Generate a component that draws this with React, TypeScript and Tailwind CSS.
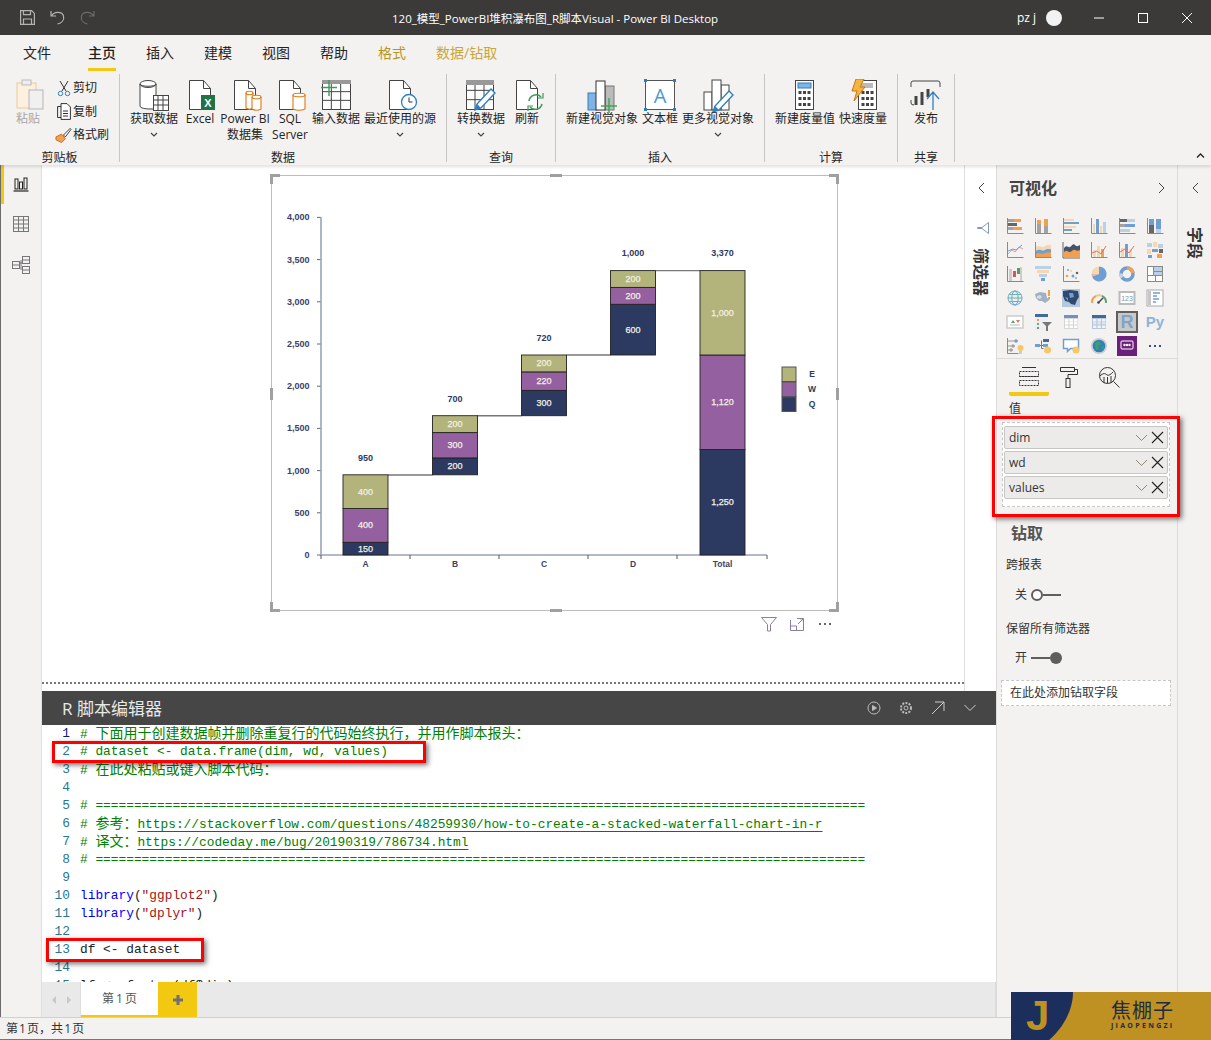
import React from "react";

const r = (x: number, y: number, w: number, h: number, c: string, key?: number) => <rect key={key ?? `${x}-${y}-${w}-${h}-${c}`} x={x} y={y} width={w} height={h} fill={c} />;
const o = "#f0a050", t = "#f7d7ae", b = "#6f9fd2", l = "#b9d0e8", g = "#a3a3a3", d = "#666666";
const ax = <path d="M1.5 1v15.5h16" fill="none" stroke="#8a8a8a" strokeWidth="1" />;
const S = ({ children }: { children: React.ReactNode }) => <svg width="18" height="18" viewBox="0 0 18 18">{children}</svg>;

const gallery: React.ReactNode[] = [
  <>{ax}{r(2, 2, 6, 3, g)}{r(8, 2, 7, 3, o)}{r(2, 6, 9, 3, d)}{r(2, 10, 5, 3, g)}{r(7, 10, 9, 3, o)}</>,
  <>{ax}{r(3, 7, 4, 9, g)}{r(3, 3, 4, 4, o)}{r(10, 9, 4, 7, g)}{r(10, 2, 4, 7, o)}</>,
  <>{ax}{r(2, 2, 10, 2, t)}{r(2, 5, 15, 2, b)}{r(2, 9, 12, 2, t)}{r(2, 12, 8, 2, b)}</>,
  <>{ax}{r(3, 7, 2, 9, t)}{r(6, 2, 3, 14, b)}{r(10, 9, 2, 7, t)}{r(13, 5, 3, 11, l)}</>,
  <>{ax}{r(2, 2, 7, 3, d)}{r(9, 2, 8, 3, l)}{r(2, 7, 5, 3, g)}{r(7, 7, 10, 3, b)}{r(2, 12, 10, 3, l)}</>,
  <>{ax}{r(3, 2, 5, 6, b)}{r(3, 8, 5, 8, d)}{r(10, 2, 5, 10, b)}{r(10, 12, 5, 4, l)}</>,
  <>{ax}<path d="M2 13l4-4 3 2 4-5 4 2" fill="none" stroke="#e69a9a" /><path d="M2 10l5-2 3 1 6-5" fill="none" stroke={b} /></>,
  <>{ax}<path d="M2 6c4-3 6 2 9-1 3-2 4-1 6-1v12H2z" fill={t} /><path d="M2 10c4-3 6 1 9-1 3-2 4 0 6-1v8H2z" fill={b} /><path d="M2 13c4-2 6 1 9-1 3-1 4 0 6-1v5H2z" fill={o} /></>,
  <><path d="M1 1v16h17" fill="none" stroke="#666" /><path d="M2 7c3-4 4 0 6-1s3-4 5-2 3 1 5 0v12H2z" fill="#44546a" /><path d="M2 11c3-3 4 0 6 0s3-3 5-2 3 1 5 0v7H2z" fill={o} /></>,
  <>{ax}{r(3, 9, 3, 7, t)}{r(7, 5, 3, 11, t)}{r(11, 8, 3, 8, o)}<path d="M2 12l5-2 4 3 5-8" fill="none" stroke="#d8776a" /></>,
  <>{ax}{r(3, 7, 3, 9, t)}{r(7, 3, 3, 13, b)}{r(11, 8, 3, 8, t)}<path d="M2 11l5-3 4 4 5-7" fill="none" stroke="#d8776a" /></>,
  <>{r(1, 2, 5, 4, l)}{r(7, 1, 4, 5, t)}{r(12, 3, 5, 4, l)}{r(1, 8, 4, 5, t)}{r(6, 8, 6, 3, b)}{r(13, 8, 4, 4, d)}{r(2, 14, 4, 3, b)}{r(11, 13, 5, 4, o)}</>,
  <><path d="M1.5 1v15.5h16" fill="none" stroke="#888" />{r(3, 4, 3, 12, "#ccc")}{r(7, 6, 3, 6, "#d05a50")}{r(11, 3, 3, 6, "#5a9a6a")}{r(14, 2, 2, 14, "#ccc")}</>,
  <>{r(1, 1, 16, 3, l)}{r(3, 5, 12, 3, t)}{r(5, 9, 8, 3, l)}{r(7, 13, 4, 3, b)}</>,
  <>{ax}<circle cx="5" cy="11" r="1.3" fill={o} /><circle cx="9" cy="6" r="1.3" fill={t} /><circle cx="11" cy="11" r="1.5" fill={b} /><circle cx="15" cy="8" r="1.3" fill={d} /><circle cx="6" cy="5" r="1" fill={b} /><circle cx="14" cy="13" r="1" fill={g} /></>,
  <><path d="M9 9V1.5a7.5 7.5 0 1 1-7 10z" fill={b} /><path d="M9 9V1.5A7.5 7.5 0 0 0 1.5 9z" fill={t} /><path d="M9 9H1.5q0 1.5.5 2.5z" fill="#e9b7a8" /></>,
  <><circle cx="9" cy="9" r="6" fill="none" stroke={b} strokeWidth="3.5" /><path d="M9 3a6 6 0 0 1 6 5" fill="none" stroke={o} strokeWidth="3.5" /><path d="M4 12.5a6 6 0 0 1-1-4" fill="none" stroke="#cbd5e0" strokeWidth="3.5" /></>,
  <>{r(1, 1, 16, 16, "#8a8a8a")}{r(2, 2, 5, 8, "#fff")}{r(8, 2, 8, 4, l)}{r(8, 7, 8, 3, l)}{r(2, 11, 7, 5, "#fff")}{r(10, 11, 6, 5, "#fff")}</>,
  <><circle cx="9" cy="9" r="7" fill="#e6f0f6" stroke="#6fa4c8" /><ellipse cx="9" cy="9" rx="3.2" ry="7" fill="none" stroke="#6fa4c8" /><path d="M2 9h14M3 5.5h12M3 12.5h12" stroke="#6fb3a0" fill="none" /></>,
  <><path d="M1 5l5-2 6 1 1 5 3 1-2 2-3 2-3-2-3 0-3-3z" fill="#9fb1c4" /><path d="M3 7l3-1 2 2-2 2-3-1z" fill="#d9dee5" /><rect x="14" y="1" width="2" height="6" fill={o} /><rect x="14" y="8" width="2" height="2" fill={o} /></>,
  <><rect x="0" y="0" width="18" height="18" fill="#b5c7dc" /><path d="M1 2l7-1 8 1 1 6-2 3-2 5-4-1-2-2-4-1-2-5z" fill="#2f4a6e" /><path d="M7 4l4 0 1 4-4 1zM3 8l3 1 0 3z" fill={b} /></>,
  <><path d="M2 14a7 7 0 0 1 4-7" fill="none" stroke={o} strokeWidth="2" /><path d="M6 7a7 7 0 0 1 6 0" fill="none" stroke="#e9c98f" strokeWidth="2" /><path d="M12 7a7 7 0 0 1 4 7" fill="none" stroke="#5f9f7a" strokeWidth="2" /><path d="M9 13l4-4" stroke="#444" strokeWidth="1.5" /><circle cx="8.5" cy="13.5" r="1.3" fill="#444" /></>,
  <><rect x="1.5" y="3" width="15" height="12" fill="#fff" stroke="#bbb" strokeWidth="2" /><text x="9" y="11.5" textAnchor="middle" fontSize="7" fill="#7a93ad" fontFamily="Liberation Sans, sans-serif">123</text></>,
  <><rect x="1" y="1" width="16" height="16" fill="#fff" stroke="#aaa" /><rect x="2" y="2" width="3" height="14" fill="#c8c8c8" /><path d="M7 4h7M7 7h4M7 10h6M7 13h3" stroke={b} strokeWidth="1.5" /></>,
  <><rect x="1" y="3" width="16" height="12" fill="#fff" stroke="#ccc" strokeWidth="1.5" /><path d="M5 10l2-3 2 3z" fill="#5f9f7a" /><path d="M10 7h4l-2 3z" fill="#d8776a" /><path d="M4 12h10" stroke="#bbb" /></>,
  <>{r(1, 1, 13, 16, "#eee")}{r(1, 1, 13, 3, "#3f6a9a")}{r(3, 6, 2, 2, o)}{r(3, 10, 2, 2, b)}{r(3, 14, 2, 2, "#5f9f7a")}<path d="M8 9h10l-4 4v5h-2v-5z" fill="#777" /></>,
  <>{r(2, 2, 14, 14, "#d5d5d5")}{r(2, 2, 14, 3, "#6f93bf")}{[3, 7.5, 12].flatMap((x) => [6, 9, 12.5].map((y) => r(x, y, 3.4, y === 9 ? 2.5 : 2.6, "#fff")))}</>,
  <>{r(2, 2, 14, 14, "#b8c6d8")}{r(2, 2, 14, 3, "#3f6a9a")}{[3, 7.5, 12].flatMap((x) => [6, 9, 12.5].map((y) => r(x, y, 3.4, 2.5, y === 9 ? "#dce6f2" : "#eef3f9")))}</>,
  null,
  null,
  <><path d="M1.5 1v15.5h11" fill="none" stroke="#8a8a8a" /><path d="M2 4h10M2 9h7M2 13h5" stroke="#999" /><circle cx="10" cy="4" r="1.7" fill={b} /><circle cx="7" cy="9" r="1.7" fill={g} /><circle cx="5" cy="13" r="1.7" fill={g} /><circle cx="14.5" cy="11" r="3" fill="#f5c76a" />{r(13, 14, 3, 3, "#ccc")}</>,
  <>{r(1, 7, 5, 3, b)}{r(9, 2, 6, 3, "#3f6a9a")}{r(9, 7, 5, 3, b)}<path d="M6 8.5h3M7.5 3.5v8h2" fill="none" stroke="#777" /><circle cx="13.5" cy="13" r="3.5" fill="#f5c76a" /></>,
  <><path d="M1.5 2.5h15v9h-8l-3 3v-3h-4z" fill="#fff" stroke={b} strokeWidth="1.5" /><circle cx="14" cy="13" r="3.5" fill="#f5c76a" /></>,
  <><circle cx="9" cy="9" r="8" fill="#ccc" /><circle cx="9" cy="9" r="6.3" fill="#2f7fc4" /><path d="M5 6l4-2 2 3-3 2 1 3-3 1zM11 10l3-1-1 4z" fill="#3fa35a" /></>,
  null,
  null,
];

const Doc = ({ children }: { children?: React.ReactNode }) => (
  <svg width="36" height="34" viewBox="-2 0 36 34"><path d="M5.5 1.5h14l7 8v21h-21z" fill="#fff" stroke="#444" strokeWidth="1" /><path d="M19.5 1.5v8h7" fill="none" stroke="#444" />{children}</svg>
);
const Cyl = ({ x, y, w, h }: { x: number; y: number; w: number; h: number }) => (
  <g fill="#fff" stroke="#dd7a10" strokeWidth="1.1"><path d={`M${x} ${y}v${h}q${w / 2} 2.5 ${w} 0v-${h}`} /><ellipse cx={x + w / 2} cy={y} rx={w / 2} ry="1.8" /></g>
);
const Grid = ({ x, y, w, h, c = "#444" }: { x: number; y: number; w: number; h: number; c?: string }) => (
  <g stroke={c} fill="none"><rect x={x + .5} y={y + .5} width={w} height={h} fill="#fff" /><path d={`M${x + w / 3} ${y}v${h}M${x + 2 * w / 3} ${y}v${h}M${x} ${y + h / 3}h${w}M${x} ${y + 2 * h / 3}h${w}`} /></g>
);
const Pencil = ({ x, y, s = 1 }: { x: number; y: number; s?: number }) => (
  <g transform={`translate(${x} ${y}) scale(${s})`}><path d="M17 1l4 4-14 15-6 2 2-6z" fill="#fff" stroke="#2e7fc2" strokeWidth="1.4" /><path d="M1 22l2-6 4 4z" fill="#2e7fc2" /></g>
);
const Calc = ({ x = 8 }: { x?: number }) => (
  <g><rect x={x + .5} y="1.5" width="18" height="29" fill="#fff" stroke="#444" />{[0, 1, 2].flatMap((i) => [0, 1, 2].map((j) => <rect key={`${i}${j}`} x={x + 3.5 + i * 4.5} y={12 + j * 6} width="3" height="3" fill="#444" />))}</g>
);

const Lab = ({ children, className = "" }: { children: React.ReactNode; className?: string }) => <div className={`text-center text-[12px] leading-[16px] text-[#252423] ${className}`}>{children}</div>;
const Chev = () => <svg className="mx-auto mt-[5px]" width="8" height="6" viewBox="0 0 8 6"><path d="M1 1l3 3 3-3" fill="none" stroke="#444" strokeWidth="1.2" /></svg>;
const Item = ({ w, icon, label, chev }: { w: string; icon: React.ReactNode; label: React.ReactNode; chev?: boolean }) => (
  <div className={`${w} flex flex-col items-center`}>
    <div className="h-[32px] flex items-start justify-center">{icon}</div>
    <Lab className="whitespace-nowrap">{label}</Lab>
    {chev && <Chev />}
  </div>
);
const Group = ({ w, title, children, pl }: { w: string; title: string; children: React.ReactNode; pl: string }) => (
  <div className={`${w} h-[88px] mt-[2px] border-r border-[#c8c6c4] flex flex-col relative`}>
    <div className={`flex-1 flex pt-[5px] ${pl}`}>{children}</div>
    <div className="h-[16px] -mb-[4px] text-center text-[12px] leading-[16px] text-[#252423]">{title}</div>
  </div>
);

const tabs = ["文件", "主页", "插入", "建模", "视图", "帮助"];

const Handle = ({ className }: { className: string }) => <div className={`absolute bg-[#a0a0a0] ${className}`} />;

const bars: { x: number; lab: string; top: string; ty: number; segs: [number, number, string, string][] }[] = [
  { x: 343, lab: "A", top: "950", ty: 458, segs: [[542.3, 555, "#2c3a61", "150"], [508.5, 542.3, "#95609f", "400"], [474.8, 508.5, "#b2b47b", "400"]] },
  { x: 432.5, lab: "B", top: "700", ty: 399, segs: [[457.9, 474.8, "#2c3a61", "200"], [432.6, 457.9, "#95609f", "300"], [415.7, 432.6, "#b2b47b", "200"]] },
  { x: 521.5, lab: "C", top: "720", ty: 338, segs: [[390.4, 415.7, "#2c3a61", "300"], [371.9, 390.4, "#95609f", "220"], [355, 371.9, "#b2b47b", "200"]] },
  { x: 610.5, lab: "D", top: "1,000", ty: 253, segs: [[304.3, 355, "#2c3a61", "600"], [287.4, 304.3, "#95609f", "200"], [270.6, 287.4, "#b2b47b", "200"]] },
  { x: 700, lab: "Total", top: "3,370", ty: 253, segs: [[449.5, 555, "#2c3a61", "1,250"], [355, 449.5, "#95609f", "1,120"], [270.6, 355, "#b2b47b", "1,000"]] },
];

const Chart = () => (
  <svg width="567" height="436" viewBox="271 175 567 436" fontFamily="Liberation Sans, Arial, sans-serif" fontWeight="700" fontSize="9">
    {[0, 500, 1000, 1500, 2000, 2500, 3000, 3500, 4000].map((v) => {
      const y = 555 - v * 0.0844;
      return <g key={v}><path d={`M317 ${y}h4`} stroke="#666" /><text x="309.5" y={y + 3} textAnchor="end" fill="#39426a">{v.toLocaleString("en-US")}</text></g>;
    })}
    <path d="M321 217v338h446" fill="none" stroke="#9aa3bb" strokeWidth="1.6" />
    {[321, 410, 499, 588, 677, 767].map((x) => <path key={x} d={`M${x} 555v4`} stroke="#555" />)}
    <path d="M388 475h44.5M477 415.7h44.5M566.5 355h44M655.5 270.6h44.5" stroke="#777" strokeWidth="1.4" fill="none" />
    {bars.map((s) => (
      <g key={s.lab}>
        {s.segs.map(([y1, y2, c, v]) => (
          <g key={c}>
            <rect x={s.x} y={y1} width="45" height={y2 - y1} fill={c} stroke="#222" strokeWidth="0.9" />
            <text x={s.x + 22.5} y={(y1 + y2) / 2 + 3} textAnchor="middle" fill="#f2f0e6" fontWeight="400" stroke="#f2f0e6" strokeWidth="0.25">{v}</text>
          </g>
        ))}
        <text x={s.x + 22.5} y={s.ty + 3} textAnchor="middle" fill="#2c3a61">{s.top}</text>
        <text x={s.x + 22.5} y={567} textAnchor="middle" fontSize="8.5" fill="#39426a">{s.lab}</text>
      </g>
    ))}
    {([[367, "#b2b47b", "E"], [382, "#95609f", "W"], [397, "#2c3a61", "Q"]] as [number, string, string][]).map(([y, c, n]) => (
      <g key={n}><rect x="782" y={y} width="14" height="14.5" fill={c} stroke="#555" /><text x="812" y={y + 10} textAnchor="middle" fontSize="8.5" fill="#2c3a61">{n}</text></g>
    ))}
  </svg>
);

const Mixed = ({ text, className }: { text: string; className?: string }) => (
  <span className={className}>
    {text.split(/([\u3000-\u9fff\uff00-\uffef]+)/).map((p, i) => /[\u3000-\u9fff\uff00-\uffef]/.test(p) ? <span key={i} className="text-[14px]">{p}</span> : p)}
  </span>
);

const G = "text-[#008000]";
const eq = "=".repeat(100);
const lines: React.ReactNode[] = [
  <Mixed text="# 下面用于创建数据帧并删除重复行的代码始终执行，并用作脚本报头：" className={G} />,
  <Mixed text="# dataset <- data.frame(dim, wd, values)" className={G} />,
  <Mixed text="# 在此处粘贴或键入脚本代码：" className={G} />,
  "",
  <span className={G}>{`# ${eq}`}</span>,
  <span className={G}><Mixed text="# 参考：" /><span className="underline decoration-[#008000] underline-offset-[3px]">https://stackoverflow.com/questions/48259930/how-to-create-a-stacked-waterfall-chart-in-r</span></span>,
  <span className={G}><Mixed text="# 译文：" /><span className="underline decoration-[#008000] underline-offset-[3px]">https://codeday.me/bug/20190319/786734.html</span></span>,
  <span className={G}>{`# ${eq}`}</span>,
  "",
  <><span className="text-[#0000ff]">library</span>(<span className="text-[#a31515]">"ggplot2"</span>)</>,
  <><span className="text-[#0000ff]">library</span>(<span className="text-[#a31515]">"dplyr"</span>)</>,
  "",
  <span className="text-[#222]">{"df <- dataset"}</span>,
  "",
  <span className="text-[#222]">{"lf <- factor(df$dim)"}</span>,
];

const FieldPill = ({ name }: { name: string }) => (
  <div className="h-[23px] bg-[#edebe9] border border-[#c8c6c4] rounded-[2px] flex items-center pl-[4px] pr-[2px] text-[12px] text-[#333]">
    <span className="flex-1">{name}</span>
    <svg width="13" height="8" viewBox="0 0 13 8"><path d="M1 1l5.5 5.5L12 1" fill="none" stroke="#8f8778" strokeWidth="1" /></svg>
    <svg className="ml-[3px] mr-[1px]" width="13" height="13" viewBox="0 0 13 13"><path d="M1 1l11 11M12 1L1 12" stroke="#222" strokeWidth="1.1" /></svg>
  </div>
);

export default function App() {
  return (
    <div className="relative w-[1211px] h-[1040px] overflow-hidden flex flex-col bg-[#f3f2f1] [font-family:'Open_Sans','Noto_Sans_CJK_SC',sans-serif] text-[#252423]">
      {/* title bar */}
      <div className="h-[35px] shrink-0 bg-[#3b3a39] flex items-center relative text-white">
        <svg className="ml-[20px]" width="15" height="15" viewBox="0 0 15 15" fill="none" stroke="#b5b3b1" strokeWidth="1.2"><path d="M.6.6h11l2.8 2.8v11H.6z" /><path d="M3.5.6v4h7v-4M3.5 14.4V9h8v5.4" /></svg>
        <svg className="ml-[15px]" width="15" height="15" viewBox="0 0 15 15" fill="none" stroke="#b5b3b1" strokeWidth="1.2"><path d="M1 1v5h5M1.5 6C4 1.500 12 1 13.500 6c1 4-2 7-6 8" /></svg>
        <svg className="ml-[15px]" width="15" height="15" viewBox="0 0 15 15" fill="none" stroke="#6d6b69" strokeWidth="1.2"><path d="M14 1v5H9M13.500 6C11 1.500 3 1 1.500 6c-1 4 2 7 6 8" /></svg>
        <div className="ml-[297px] pt-[2px] text-[11.5px] whitespace-nowrap">120_模型_PowerBI堆积瀑布图_R脚本Visual - Power BI Desktop</div>
        <div className="flex-1" />
        <span className="text-[12px] mr-[10px]">pz j</span>
        <span className="w-[16px] h-[16px] rounded-full bg-[#f2f2f2] mr-[32px]" />
        <svg width="10" height="2" viewBox="0 0 10 2"><path d="M0 1h10" stroke="#fff" /></svg>
        <svg className="ml-[34px]" width="10" height="10" viewBox="0 0 10 10"><rect x=".5" y=".5" width="9" height="9" fill="none" stroke="#fff" /></svg>
        <svg className="ml-[34px] mr-[19px]" width="10" height="10" viewBox="0 0 10 10"><path d="M0 0l10 10M10 0L0 10" stroke="#fff" /></svg>
      </div>

      {/* tabs */}
      <div className="h-[37px] shrink-0 flex pl-[8px] text-[14px]">
        {tabs.map((n) => (
          <div key={n} className={`relative ${n === "文件" ? "pl-[15px] pr-[22px]" : "px-[15px]"} pt-[8px] leading-[20px]`}>
            <span className={n === "主页" ? "font-medium text-[#201f1e]" : ""}>{n}</span>
            {n === "主页" && <div className="absolute left-[15px] right-[15px] top-[33px] h-[3px] bg-[#f2c811]" />}
          </div>
        ))}
        <div className="px-[15px] pt-[8px] leading-[20px] text-[#b8941f]">格式</div>
        <div className="px-[15px] pt-[8px] leading-[20px] text-[#c9a63a]">数据/钻取</div>
      </div>

      {/* ribbon */}
      <div className="h-[93px] shrink-0 flex relative shadow-[0_2px_3px_rgba(0,0,0,0.12)] z-10">
        <Group w="w-[120px]" title="剪贴板" pl="pl-[16px]">
          <div className="w-[28px]">
            <svg className="h-[32px]" width="28" height="32" viewBox="0 0 28 32"><rect x="1" y="4" width="19" height="25" fill="#fdf0df" stroke="#f0c89a" /><rect x="6" y="1" width="9" height="5" fill="#eee" stroke="#bbb" /><rect x="13" y="11" width="14" height="19" fill="#f0f0f0" stroke="#b5b5b5" /></svg>
            <div className="text-[12px] leading-[16px] text-[#a6a6a6] whitespace-nowrap">粘贴</div>
          </div>
          <div className="ml-[11px] -mt-[3px] flex flex-col">
            {[
              ["剪切", <svg key="c" width="14" height="17" viewBox="0 0 14 17" fill="none" stroke="#333"><path d="M3 1l6 10M11 1L5 11" /><circle cx="3.500" cy="13.500" r="2.200" stroke="#2e7fc2" /><circle cx="10.500" cy="13.500" r="2.200" stroke="#2e7fc2" /></svg>],
              ["复制", <svg key="f" width="14" height="17" viewBox="0 0 14 17" fill="#fff" stroke="#333"><path d="M4 3.500H.6v11H4" fill="none" /><path d="M4 .6h6l3.400 3.400v12.400H4z" /><path d="M6 8h5M6 10.500h5M6 13h5" /></svg>],
              ["格式刷", <svg key="b" width="18" height="17" viewBox="0 0 18 17"><path d="M1 10l6-3 4 5-4 4-6-3z" fill="#f0a050" stroke="#c9701a" /><path d="M9 8l7-7 1 1-6 8z" fill="#fff" stroke="#333" /></svg>],
            ].map(([n, ic]) => (
              <div key={n as string} className="h-[24px] flex items-center -mt-[0.5px] first:mt-0">
                <div className="w-[17px] flex justify-center">{ic}</div>
                <span className="ml-[1px] text-[12px] leading-[16px] whitespace-nowrap">{n}</span>
              </div>
            ))}
          </div>
        </Group>
        <Group w="w-[327px]" title="数据" pl="pl-[10px]">
          <Item w="w-[48px]" chev label="获取数据" icon={<svg width="36" height="34" viewBox="0 0 36 34"><path d="M4 5v22c0 2 5 3 11 3h5V5" fill="#fff" stroke="#444" /><ellipse cx="12" cy="5" rx="8" ry="3.500" fill="#fff" stroke="#444" /><path d="M4 5c0 3 16 3 16 0" fill="none" stroke="#444" /><Grid x={17} y={16} w={15} h={15} /></svg>} />
          <Item w="w-[44px]" label="Excel" icon={<Doc><rect x="17" y="16" width="14" height="15" fill="#217346" /><text x="24" y="27.500" textAnchor="middle" fontSize="11" fontWeight="700" fill="#fff" fontFamily="Liberation Sans, sans-serif">X</text></Doc>} />
          <Item w="w-[46px]" label={<>Power BI<br />数据集</>} icon={<Doc><Cyl x={17} y={14} w={7} h={15} /><Cyl x={23} y={18} w={9} h={12} /></Doc>} />
          <Item w="w-[44px]" label={<>SQL<br />Server</>} icon={<Doc><Cyl x={19} y={16} w={12} h={14} /></Doc>} />
          <Item w="w-[48px]" label="输入数据" icon={<svg width="36" height="34" viewBox="0 0 36 34"><Grid x={4} y={4} w={28} h={26} /><rect x="4" y="1" width="29" height="4" fill="#999" /><path d="M3 8.500h16M11 1v16" stroke="#3f9a5a" strokeWidth="1.400" /></svg>} />
          <Item w="w-[80px]" chev label="最近使用的源" icon={<Doc><circle cx="25" cy="23" r="7.500" fill="#fff" stroke="#2e7fc2" strokeWidth="1.300" /><path d="M25 18.500V23h3.500" fill="none" stroke="#333" /></Doc>} />
        </Group>
        <Group w="w-[109px]" title="查询" pl="pl-[10px]">
          <Item w="w-[48px]" chev label="转换数据" icon={<svg width="36" height="34" viewBox="0 0 36 34"><Grid x={3} y={2} w={27} h={28} /><rect x="3" y="1" width="28" height="5" fill="#999" /><Pencil x={11} y={9} /></svg>} />
          <Item w="w-[44px]" label="刷新" icon={<Doc><path d="M18 22a7 7 0 0 1 12-4M31 25a7 7 0 0 1-12 3" fill="none" stroke="#3f9a5a" strokeWidth="1.500" /><path d="M27 19h5v-5M22 27h-5v5" fill="none" stroke="#3f9a5a" strokeWidth="1.200" /></Doc>} />
        </Group>
        <Group w="w-[209px]" title="插入" pl="pl-[10px]">
          <Item w="w-[72px]" label="新建视觉对象" icon={<svg width="36" height="34" viewBox="0 0 36 34"><rect x="4" y="14" width="9" height="17" fill="#7fb4e4" stroke="#2e7fc2" /><rect x="21" y="7" width="9" height="24" fill="#bbb" stroke="#777" /><rect x="12" y="2" width="9" height="29" fill="#fff" stroke="#333" /><path d="M17 27h16M25 19v16" stroke="#3aa655" strokeWidth="1.400" /></svg>} />
          <Item w="w-[44px]" label="文本框" icon={<svg width="34" height="34" viewBox="0 0 34 34"><rect x="2.500" y="1.500" width="29" height="29" fill="#fff" stroke="#555" /><rect x="1" y="0" width="3" height="3" fill="#2e7fc2" /><rect x="30" y="0" width="3" height="3" fill="#2e7fc2" /><rect x="1" y="29" width="3" height="3" fill="#2e7fc2" /><rect x="30" y="29" width="3" height="3" fill="#2e7fc2" /><text x="17" y="24" textAnchor="middle" fontSize="20" fill="#4a9ad8" fontFamily="Open Sans, sans-serif">A</text></svg>} />
          <Item w="w-[72px]" chev label="更多视觉对象" icon={<svg width="36" height="34" viewBox="0 0 36 34"><rect x="4" y="13" width="8" height="18" fill="#fff" stroke="#444" /><rect x="21" y="6" width="8" height="25" fill="#fff" stroke="#444" /><rect x="12" y="1" width="9" height="30" fill="#fff" stroke="#444" /><Pencil x={12} y={11} /></svg>} />
        </Group>
        <Group w="w-[133px]" title="计算" pl="pl-[10px]">
          <Item w="w-[60px]" label="新建度量值" icon={<svg width="36" height="34" viewBox="0 0 36 34"><Calc /><rect x="11" y="4" width="13" height="5" fill="#7fb4e4" stroke="#2e7fc2" /></svg>} />
          <Item w="w-[56px]" label="快速度量" icon={<svg width="36" height="34" viewBox="0 0 36 34"><Calc x={13} /><rect x="16" y="4" width="12" height="5" fill="#bbb" /><path d="M11 0h8l-4 8h5L9 22l3-10H7z" fill="#f5b63e" stroke="#d0701a" /></svg>} />
        </Group>
        <Group w="w-[57px]" title="共享" pl="pl-0">
          <Item w="w-[56px]" label="发布" icon={<svg width="34" height="34" viewBox="0 0 34 34"><path d="M2 8V4q0-2 2-2h25q2 0 2 2v4M2 21v3q0 2 3 2" fill="none" stroke="#444" /><path d="M7 17v9M13 13v13M19 10v8" stroke="#444" strokeWidth="3" fill="none" /><path d="M24 31V14M18 20l6-7 6 7" fill="none" stroke="#2e7fc2" strokeWidth="1.300" /></svg>} />
        </Group>
        <svg className="absolute left-[1196px] top-[80px]" width="9" height="7" viewBox="0 0 9 7"><path d="M1 5.500l3.500-3.500 3.500 3.500" fill="none" stroke="#222" strokeWidth="1.300" /></svg>
      </div>

      {/* main */}
      <div className="flex-1 flex min-h-0">
        <div className="w-[42px] shrink-0 border-l border-[#6b6b6b] border-r border-r-[#e1dfdd] relative">
          <div className="absolute left-0 top-0 w-[3px] h-[39px] bg-[#f2c811]" />
          <div className="flex flex-col items-center pt-[11px] gap-[24px]">
            <svg width="16" height="16" viewBox="0 0 16 16" fill="none" stroke="#222"><path d="M.5 15h15" strokeWidth="1.200" /><rect x="2" y="3" width="3" height="10" /><rect x="6.500" y="6" width="3" height="7" /><rect x="11" y="2" width="3" height="11" /></svg>
            <svg width="16" height="16" viewBox="0 0 16 16" fill="none" stroke="#777"><rect x=".5" y=".5" width="15" height="15" /><path d="M.5 4h15M.5 8h15M.5 12h15M5.500 .5v15M10.500 .5v15" /></svg>
            <svg width="18" height="18" viewBox="0 0 18 18" fill="none" stroke="#777"><rect x=".5" y="5.500" width="7" height="7" /><path d="M.5 9h7" /><rect x="10.500" y=".5" width="7" height="7" /><path d="M10.500 4h7" /><rect x="10.500" y="10.500" width="7" height="7" /><path d="M10.500 14h7M7.500 7h3M9 4v10" /></svg>
          </div>
        </div>

        <div className="w-[954px] shrink-0 flex flex-col">
          <div className="h-[526px] flex shrink-0 bg-white">
            <div className="w-[923px] h-full border-r border-[#e1dfdd] flex flex-col">
              <div className="ml-[229px] mt-[10px] w-[567px] h-[436px] relative border border-[#bdbdbd]">
                <div className="-m-px"><Chart /></div>
                <Handle className="-left-[2px] -top-[2px] w-[10px] h-[3px]" />
                <Handle className="-left-[2px] -top-[2px] w-[3px] h-[10px]" />
                <Handle className="-right-[2px] -top-[2px] w-[10px] h-[3px]" />
                <Handle className="-right-[2px] -top-[2px] w-[3px] h-[10px]" />
                <Handle className="-left-[2px] -bottom-[2px] w-[10px] h-[3px]" />
                <Handle className="-left-[2px] -bottom-[2px] w-[3px] h-[10px]" />
                <Handle className="-right-[2px] -bottom-[2px] w-[10px] h-[3px]" />
                <Handle className="-right-[2px] -bottom-[2px] w-[3px] h-[10px]" />
                <Handle className="left-[278px] -top-[2px] w-[12px] h-[3px]" />
                <Handle className="left-[278px] -bottom-[2px] w-[12px] h-[3px]" />
                <Handle className="-left-[2px] top-[212px] w-[3px] h-[12px]" />
                <Handle className="-right-[2px] top-[212px] w-[3px] h-[12px]" />
              </div>
              <div className="ml-[719px] mt-[6px] flex items-center h-[14px]">
                <svg width="16" height="15" viewBox="0 0 16 15" fill="none" stroke="#8d7f9a"><path d="M.5.500h15L9.500 7.500V14h-3V7.500z" /></svg>
                <svg className="ml-[13px]" width="14" height="13" viewBox="0 0 14 13" fill="none" stroke="#8d7f9a"><path d="M.5 2v10.500h13V.500H7M.5 8h6v4.500M8 6l5-5M10 .8h3.300V4" /></svg>
                <div className="ml-[15px] flex gap-[3px]"><i className="w-[2px] h-[2px] bg-[#666]" /><i className="w-[2px] h-[2px] bg-[#666]" /><i className="w-[2px] h-[2px] bg-[#666]" /></div>
              </div>
              <div className="flex-1" />
              <div className="mb-[7px] border-b-2 border-dotted border-[#777]" />
            </div>
            <div className="w-[31px] flex flex-col items-center">
              <svg className="mt-[17px]" width="8" height="12" viewBox="0 0 8 12"><path d="M7 1L2 6l5 5" fill="none" stroke="#444" /></svg>
              <svg className="mt-[28px] ml-[4px]" width="12" height="12" viewBox="0 0 12 12"><path d="M11.500.500v11L5 6.500H.5v-1H5z" fill="none" stroke="#7f99bb" /></svg>
              <div className="mt-[14px] [writing-mode:vertical-rl] [text-orientation:sideways] text-[16px] leading-[18px] font-bold text-[#333]">筛选器</div>
            </div>
          </div>

          <div className="h-[34px] shrink-0 bg-[#464646] flex items-center pl-[20px]">
            <span className="text-[17px] text-[#e8e8e8] whitespace-nowrap pt-[1px]">R 脚本编辑器</span>
            <div className="flex-1" />
            <svg width="14" height="14" viewBox="0 0 14 14" fill="none" stroke="#bbb"><circle cx="7" cy="7" r="6" /><path d="M5.500 4.500v5l4-2.500z" fill="#bbb" /></svg>
            <svg className="ml-[18px]" width="14" height="14" viewBox="0 0 14 14" fill="none" stroke="#bbb"><circle cx="7" cy="7" r="2" /><circle cx="7" cy="7" r="5" strokeDasharray="2 1.200" strokeWidth="2" /></svg>
            <svg className="ml-[18px]" width="14" height="14" viewBox="0 0 14 14" fill="none" stroke="#ccc"><path d="M1 13L13 1M4 1h9v9" /></svg>
            <svg className="ml-[19px] mr-[20px]" width="12" height="8" viewBox="0 0 12 8" fill="none" stroke="#ccc"><path d="M.5 1l5.500 5.500L11.500 1" /></svg>
          </div>

          <div className="flex-1 min-h-0 overflow-hidden bg-white relative [font-family:'Liberation_Mono','Noto_Sans_CJK_SC',monospace] text-[12.83px] leading-[18px]">
            {lines.map((c, i) => (
              <div key={i} className="h-[18px] flex whitespace-pre">
                <span className={`w-[28px] text-right shrink-0 ${i === 0 ? "text-[#0b216f]" : "text-[#237893]"}`}>{i + 1}</span>
                <span className="ml-[10px]">{c}</span>
              </div>
            ))}
          </div>

          <div className="h-[35px] shrink-0 bg-[#e9e9e9] border-r border-[#dcdcdc] flex">
            <div className="w-[39px] flex items-center justify-around px-[4px] border-r border-[#ddd]">
              <svg width="6" height="10" viewBox="0 0 6 10"><path d="M5 1v8L1 5z" fill="#c8c8c8" /></svg>
              <svg width="6" height="10" viewBox="0 0 6 10"><path d="M1 1v8l4-4z" fill="#c8c8c8" /></svg>
            </div>
            <div className="w-[77px] bg-white border-b-[2px] border-[#f2c811] flex items-center justify-center text-[12px] text-[#555] [word-spacing:-1px]">第 1 页</div>
            <div className="w-[39px] bg-[#f2c811] flex items-center justify-center">
              <svg width="12" height="12" viewBox="0 0 12 12"><path d="M6 1v10M1 6h10" stroke="#6f6f6f" strokeWidth="3" /></svg>
            </div>
          </div>
        </div>

        {/* Visualization pane */}
        <div className="w-[182px] shrink-0 border-l border-r border-[#dddbd9] flex flex-col">
          <div className="h-[49px] flex items-start pl-[12px] pr-[11px] pt-[11px]">
            <span className="flex-1 text-[16px] leading-[24px] font-bold text-[#444]">可视化</span>
            <svg className="mt-[6px]" width="8" height="12" viewBox="0 0 8 12"><path d="M1 1l5 5-5 5" fill="none" stroke="#444" /></svg>
          </div>
          <div className="pl-[4px] grid grid-cols-[repeat(6,28px)] grid-rows-[repeat(6,24px)] border-b-0">
            {gallery.map((ic, i) => (
              <div key={i} className="flex items-center justify-center">
                {i === 28 ? (
                  <div className="w-[22px] h-[22px] bg-[#c8c8c8] border-2 border-[#5f5f5f] flex items-center justify-center text-[18px] leading-none font-bold text-[#7fa3cf] [font-family:'Liberation_Sans',sans-serif]">R</div>
                ) : i === 29 ? (
                  <span className="text-[15px] font-bold text-[#8fb3da] [font-family:'Liberation_Sans',sans-serif]">Py</span>
                ) : i === 34 ? (
                  <div className="w-[20px] h-[20px] bg-[#6c1f7a] flex items-center justify-center">
                    <svg width="14" height="12" viewBox="0 0 14 12"><rect x="1" y="1" width="12" height="8" rx="1" fill="none" stroke="#fff" /><circle cx="4.500" cy="5" r="1.200" fill="#fff" /><circle cx="7" cy="5" r="1.200" fill="#fff" /><circle cx="9.500" cy="5" r="1.200" fill="#fff" /></svg>
                  </div>
                ) : i === 35 ? (
                  <div className="flex gap-[3px]"><i className="w-[2px] h-[2px] bg-[#35507a]" /><i className="w-[2px] h-[2px] bg-[#35507a]" /><i className="w-[2px] h-[2px] bg-[#35507a]" /></div>
                ) : <S>{ic}</S>}
              </div>
            ))}
          </div>
          <div className="border-t border-[#dddbd9] h-[37px] pl-[12px] flex items-start relative">
            <div className="w-[40px] h-[37px] border-b-[4px] border-[#f2c811] rounded-b-[2px] flex justify-center pt-[8px]">
              <svg width="20" height="19" viewBox="0 0 20 19" fill="none" stroke="#333"><path d="M3 .5h14" /><path d="M.5 4.500h19v5h-19zM.5 13.500h19v5h-19z" strokeDasharray="2 1" /><path d="M.5 9.500h19" strokeDasharray="2 1" /></svg>
            </div>
            <svg className="ml-[11px] mt-[8px]" width="18" height="21" viewBox="0 0 18 21" fill="none" stroke="#333"><path d="M.5.500h14v4H.5zM14.500 2.500h3v5H8v4" /><rect x="6" y="11.500" width="4" height="9" /></svg>
            <svg className="ml-[21px] mt-[8px]" width="21" height="21" viewBox="0 0 21 21" fill="none" stroke="#333"><circle cx="8.500" cy="8.500" r="8" /><path d="M14.500 14.500l6 6M1 9c3-3 5-3 7-1 2 1 4-1 6-3M5 10v6M8.500 10v6M12 9v7" /></svg>
          </div>
          <div className="pl-[12px] text-[12px] leading-[16px] mt-[6px] text-[#333]">值</div>
          <div className="ml-[5px] mr-[7px] mt-[5px] h-[85px] bg-white border border-dashed border-[#c8c6c4] px-[1px] pt-[3px] flex flex-col gap-[2px]">
            <FieldPill name="dim" />
            <FieldPill name="wd" />
            <FieldPill name="values" />
          </div>
          <div className="pl-[14px] mt-[14px] text-[16px] leading-[24px] font-bold text-[#555]">钻取</div>
          <div className="pl-[9px] mt-[12px] text-[12px] leading-[16px] text-[#333]">跨报表</div>
          <div className="pl-[18px] mt-[12px] h-[20px] flex items-center text-[12px] text-[#333]">
            <span>关</span>
            <span className="ml-[4px] w-[12px] h-[12px] rounded-full border-2 border-[#605e5c] bg-white" />
            <span className="w-[18px] h-[2px] bg-[#605e5c]" />
          </div>
          <div className="pl-[9px] mt-[16px] text-[12px] leading-[16px] text-[#333]">保留所有筛选器</div>
          <div className="pl-[18px] mt-[11px] h-[20px] flex items-center text-[12px] text-[#333]">
            <span>开</span>
            <span className="ml-[4px] w-[19px] h-[2px] bg-[#605e5c]" />
            <span className="w-[12px] h-[12px] rounded-full bg-[#605e5c]" />
          </div>
          <div className="ml-[4px] mr-[6px] mt-[12px] h-[26px] bg-white border border-dashed border-[#c8c6c4] pl-[8px] flex items-center text-[12px] text-[#333]">在此处添加钻取字段</div>
        </div>

        {/* fields pane */}
        <div className="flex-1 flex flex-col items-center">
          <svg className="mt-[17px]" width="8" height="12" viewBox="0 0 8 12"><path d="M7 1L2 6l5 5" fill="none" stroke="#444" /></svg>
          <div className="mt-[33px] [writing-mode:vertical-rl] [text-orientation:sideways] text-[16px] leading-[18px] font-bold text-[#333]">字段</div>
        </div>
      </div>

      {/* status bar */}
      <div className="h-[23px] shrink-0 border-t border-[#d2d0ce] border-b border-b-[#777] pl-[6px] pt-[1px] flex items-center text-[12px] text-[#333] [word-spacing:-2px]">第 1 页，共 1 页</div>

      {/* red call-outs */}
      <div className="absolute left-[992px] top-[416px] w-[188px] h-[101px] border-[3px] border-[#ff0000] shadow-[2px_2px_5px_rgba(0,0,0,0.55)]" />
      <div className="absolute left-[52px] top-[741px] w-[374px] h-[22px] border-[3px] border-[#ff0000] shadow-[2px_2px_5px_rgba(0,0,0,0.55)]" />
      <div className="absolute left-[46px] top-[938px] w-[158px] h-[24px] border-[3px] border-[#ff0000] shadow-[2px_2px_5px_rgba(0,0,0,0.55)]" />

      {/* logo */}
      <div className="absolute left-[1011px] top-[992px] w-[200px] h-[48px] bg-[#bf9022] overflow-hidden">
        <svg className="absolute left-0 top-0" width="64" height="48" viewBox="0 0 64 48"><path d="M0 0h62c0 20-12 38-24 48H0z" fill="#1c2f5c" /></svg>
        <span className="absolute left-[15px] top-[3px] text-[42px] leading-[42px] font-bold text-[#bf9022] [font-family:'Liberation_Sans',sans-serif]">J</span>
        <span className="absolute left-[100px] top-[9px] text-[20px] leading-[20px] tracking-[1px] text-[#1f2a44] whitespace-nowrap">焦棚子</span>
        <span className="absolute left-[100px] top-[30px] text-[7px] leading-[8px] font-bold tracking-[2.300px] text-[#1f2a44] whitespace-nowrap">JIAOPENGZI</span>
      </div>
    </div>
  );
}
